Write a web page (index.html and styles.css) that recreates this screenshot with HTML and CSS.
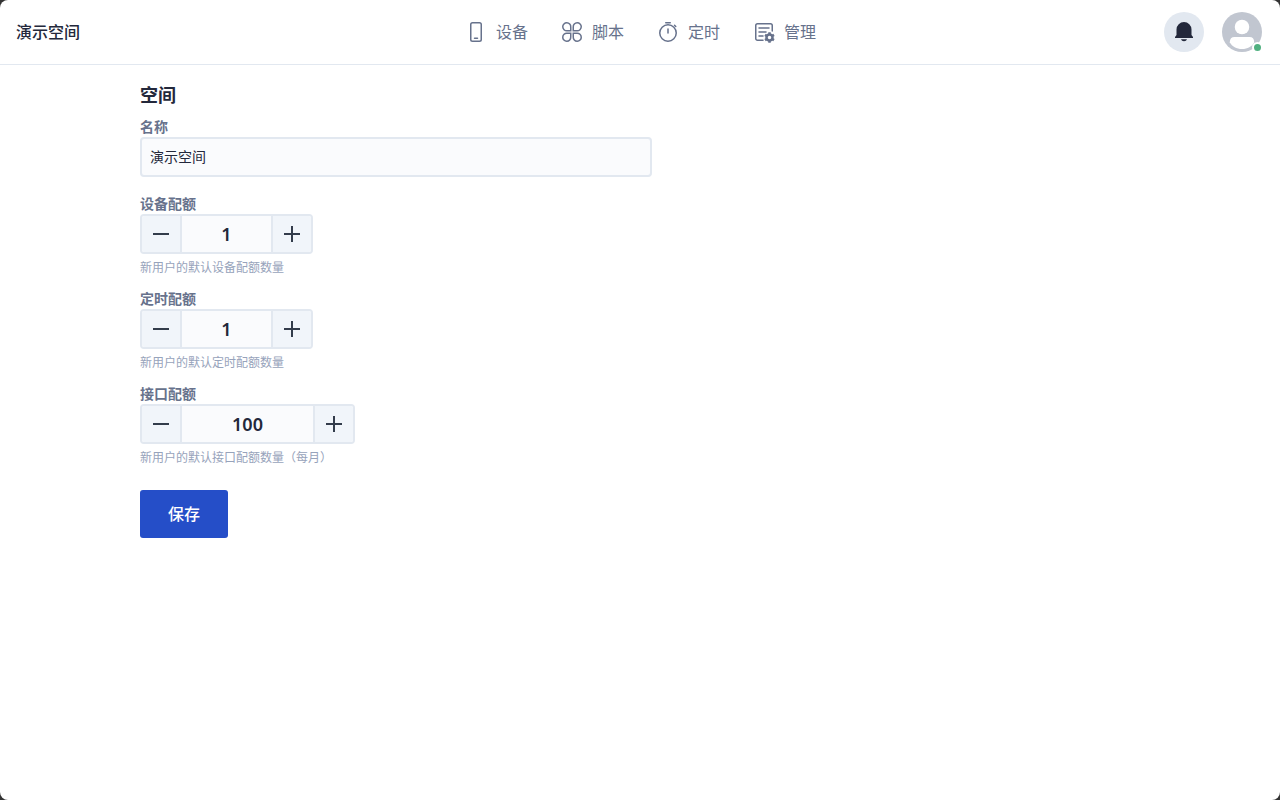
FILE: index.html
```html
<!DOCTYPE html>
<html lang="zh-CN">
<head>
    <meta charset="UTF-8">
    <meta name="viewport" content="width=device-width, initial-scale=1.0">
    <title>演示空间</title>
    <link rel="stylesheet" href="styles.css">
</head>
<body>
    <div class="app">
        <header class="header">
            <a class="brand" href="#">演示空间</a>
            <nav class="nav">
                <a href="#">
                    <svg viewBox="0 0 24 24" fill="none" stroke="currentColor" stroke-width="1.5" stroke-linecap="round">
                        <rect x="6.75" y="2.75" width="10.5" height="18.5" rx="1.75"/>
                        <path d="M10.5 18.25h3"/>
                    </svg>
                    设备
                </a>
                <a href="#">
                    <svg viewBox="0 0 24 24" fill="none" stroke="currentColor" stroke-width="1.5">
                        <path d="M10.75 10.75H7A4 4 0 1 1 10.75 7zM13.25 10.75H17A4 4 0 1 0 13.25 7zM10.75 13.25H7A4 4 0 1 0 10.75 17zM13.25 13.25H17A4 4 0 1 1 13.25 17z"/>
                    </svg>
                    脚本
                </a>
                <a href="#">
                    <svg viewBox="0 0 24 24" fill="none" stroke="currentColor" stroke-width="1.5" stroke-linecap="round">
                        <circle cx="12" cy="13" r="8.25"/>
                        <path d="M12 9v4M9.75 2.75h4.5M18.5 5.25l1.25 1.25"/>
                    </svg>
                    定时
                </a>
                <a href="#">
                    <svg viewBox="0 0 24 24" fill="none" stroke="currentColor" stroke-width="1.5" stroke-linecap="round">
                        <path d="M11 20.25H5.5a1.75 1.75 0 0 1-1.75-1.75v-13c0-1 .75-1.75 1.75-1.75h13c1 0 1.75.75 1.75 1.75V11"/>
                        <path d="M7 8h10M7 12h7M7 16h4"/>
                        <circle cx="17.5" cy="17.5" r="3" stroke-width="2.5"/>
                        <path stroke-width="2.5" stroke-linecap="butt" d="M17.5 12.25v2M17.5 20.75v2M13 14.9l1.75 1M20.25 19.1l1.75 1M13 20.1l1.75-1M20.25 15.9l1.75-1"/>
                    </svg>
                    管理
                </a>
            </nav>
            <div class="actions">
                <button class="bell" type="button" aria-label="通知">
                    <svg viewBox="0 0 24 24" fill="currentColor">
                        <path d="M3 18v-1l1.500-2V9.500a7.500 7.500 0 0 1 15 0V15l1.500 2v1zM9 19.250h6c-.5 1.250-1.500 2-3 2s-2.500-.75-3-2z"/>
                    </svg>
                </button>
                <button class="avatar" type="button" aria-label="账户">
                    <svg viewBox="0 0 40 40">
                        <circle cx="20" cy="20" r="20" fill="#c1c6d0"/>
                        <circle cx="20" cy="15" r="7.25" fill="#fff"/>
                        <path fill="#fff" d="M12.5 25h15c3 0 4.7 1.8 4.7 5.2C30 34.500 25.500 37 20 37S10 34.500 7.800 30.200C7.800 26.800 9.500 25 12.500 25z"/>
                    </svg>
                    <span class="status"></span>
                </button>
            </div>
        </header>

        <main class="container">
            <h1>空间</h1>
            <form class="form">
                <div class="field field-text">
                    <label for="name">名称</label>
                    <input class="text-input" id="name" type="text" value="演示空间">
                </div>
                <div class="field">
                    <label for="device">设备配额</label>
                    <div class="stepper">
                        <button type="button" data-step="-1" aria-label="减少"><svg viewBox="0 0 16 16"><path d="M0 8h16"/></svg></button>
                        <input id="device" type="text" inputmode="numeric" value="1">
                        <button type="button" data-step="1" aria-label="增加"><svg viewBox="0 0 16 16"><path d="M0 8h16M8 0v16"/></svg></button>
                    </div>
                    <p class="hint">新用户的默认设备配额数量</p>
                </div>
                <div class="field">
                    <label for="timer">定时配额</label>
                    <div class="stepper">
                        <button type="button" data-step="-1" aria-label="减少"><svg viewBox="0 0 16 16"><path d="M0 8h16"/></svg></button>
                        <input id="timer" type="text" inputmode="numeric" value="1">
                        <button type="button" data-step="1" aria-label="增加"><svg viewBox="0 0 16 16"><path d="M0 8h16M8 0v16"/></svg></button>
                    </div>
                    <p class="hint">新用户的默认定时配额数量</p>
                </div>
                <div class="field">
                    <label for="api">接口配额</label>
                    <div class="stepper stepper-wide">
                        <button type="button" data-step="-1" aria-label="减少"><svg viewBox="0 0 16 16"><path d="M0 8h16"/></svg></button>
                        <input id="api" type="text" inputmode="numeric" value="100">
                        <button type="button" data-step="1" aria-label="增加"><svg viewBox="0 0 16 16"><path d="M0 8h16M8 0v16"/></svg></button>
                    </div>
                    <p class="hint">新用户的默认接口配额数量（每月）</p>
                </div>
                <button class="save" type="submit">保存</button>
            </form>
        </main>
    </div>

    <script>
        document.querySelectorAll('.stepper button').forEach((button) => {
            button.addEventListener('click', () => {
                const input = button.parentElement.querySelector('input');
                input.value = Math.max(0, Number(input.value) + Number(button.dataset.step));
            });
        });

        document.querySelector('.form').addEventListener('submit', (e) => e.preventDefault());
    </script>
</body>
</html>
```
FILE: styles.css
```css
* {
    box-sizing: border-box;
    margin: 0;
    padding: 0;
}

html {
    background-color: #333;
}

body, button, input {
    font-family: "Noto Sans", "Noto Sans CJK SC", sans-serif;
    color: #23283b;
}

button {
    border: none;
    cursor: pointer;
}

a {
    color: inherit;
    text-decoration: none;
}

svg {
    display: block;
}

.app {
    min-height: 100vh;
    background-color: #fff;
    border-radius: 8px;
}

.header {
    display: grid;
    grid-template-columns: 1fr auto 1fr;
    align-items: center;
    height: 65px;
    padding: 0 16px;
    border-bottom: 1px solid #e2e8f0;
}

.brand {
    font-size: 16px;
    font-weight: 500;
    line-height: 24px;
}

.nav {
    display: flex;
    gap: 32px;
}

.nav a {
    display: flex;
    align-items: center;
    gap: 8px;
    font-size: 16px;
    line-height: 24px;
    color: #67728c;
}

.nav svg {
    width: 24px;
    height: 24px;
}

.actions {
    display: flex;
    justify-content: flex-end;
    gap: 18px;
    padding-right: 2px;
}

.bell, .avatar {
    width: 40px;
    height: 40px;
    border-radius: 50%;
}

.bell {
    display: flex;
    align-items: center;
    justify-content: center;
    background-color: #e2e8f0;
}

.bell svg {
    width: 24px;
    height: 24px;
}

.avatar {
    position: relative;
    background: none;
}

.status {
    position: absolute;
    right: -1px;
    bottom: -1px;
    width: 11px;
    height: 11px;
    border: 2px solid #fff;
    border-radius: 50%;
    background-color: #50b080;
    box-sizing: border-box;
}

.container {
    max-width: 1000px;
    margin: 0 auto;
    padding: 16px 0;
}

h1 {
    margin-bottom: 8px;
    font-size: 18px;
    font-weight: 700;
    line-height: 28px;
}

.form {
    max-width: 512px;
}

.field {
    margin-bottom: 12px;
}

.field-text {
    margin-bottom: 17px;
}

.field label {
    display: block;
    font-size: 14px;
    font-weight: 600;
    line-height: 20px;
    color: #67728c;
}

.text-input {
    display: block;
    width: 100%;
    height: 40px;
    padding: 0 8px 2px;
    border: 2px solid #e2e8f0;
    border-radius: 4px;
    background-color: #fafbfd;
    font-size: 14px;
}

.stepper {
    display: flex;
    width: 173px;
    height: 40px;
    border: 2px solid #e2e8f0;
    border-radius: 4px;
    overflow: hidden;
}

.stepper-wide {
    width: 215px;
}

.stepper button {
    display: flex;
    flex: none;
    align-items: center;
    justify-content: center;
    width: 38px;
    background-color: #f1f5fa;
}

.stepper svg {
    width: 16px;
    height: 16px;
    fill: none;
    stroke: #333c4b;
    stroke-width: 2;
}

.stepper input {
    flex: 1;
    min-width: 0;
    border: solid #e2e8f0;
    border-width: 0 2px;
    background-color: #fafbfd;
    font-size: 18px;
    font-weight: 600;
    text-align: center;
}

.hint {
    margin-top: 5px;
    font-size: 12px;
    line-height: 18px;
    color: #97a3bb;
}

.save {
    height: 48px;
    margin-top: 11px;
    padding: 0 28px 2px;
    border-radius: 3px;
    background-color: #254ec8;
    color: #fff;
    font-size: 16px;
    font-weight: 500;
}
```
